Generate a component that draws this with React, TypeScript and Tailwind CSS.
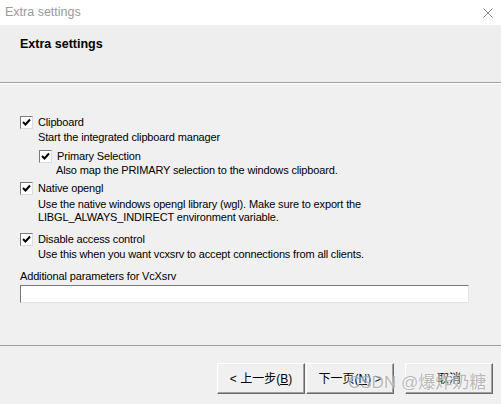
import React from "react";

const sans = "font-['Liberation_Sans','Noto_Sans_CJK_SC',sans-serif]";

function Check({ checked = true }: { checked?: boolean }) {
  return (
    <div className="w-[13px] h-[13px] shrink-0 bg-white border border-t-[#7a7a7a] border-l-[#7a7a7a] border-r-[#dcdcdc] border-b-[#dcdcdc] flex items-center justify-center">
      {checked && (
        <svg width="9" height="9" viewBox="0 0 9 9">
          <path d="M1 4 L3.5 6.5 L8 1.5" stroke="#000" strokeWidth="2" fill="none" />
        </svg>
      )}
    </div>
  );
}

function CheckRow({ label, className = "" }: { label: string; className?: string }) {
  return (
    <div className={`flex items-center h-[13px] gap-[5px] ${className}`}>
      <Check />
      <span className="leading-[13px]">{label}</span>
    </div>
  );
}

function WinButton({ children }: { children: React.ReactNode }) {
  return (
    <button className="w-[88px] h-[31px] bg-[#f0f0f0] border border-t-white border-l-white border-r-[#696969] border-b-[#696969] shadow-[inset_-1px_-1px_0_#a0a0a0] text-[12px] text-black flex items-center justify-center">
      {children}
    </button>
  );
}

export default function App() {
  return (
    <div className={`relative w-[501px] h-[404px] bg-[#f0f0f0] flex flex-col text-[11px] text-black ${sans}`}>
      {/* Title bar */}
      <div className="h-[25px] bg-white flex items-center justify-between pl-[5px] pr-[8px]">
        <span className="text-[12.5px] text-[#9a9a9a]">Extra settings</span>
        <svg width="10" height="10" viewBox="0 0 10 10">
          <path d="M0.5 0.5 L9.5 9.5 M9.5 0.5 L0.5 9.5" stroke="#8a8a8a" strokeWidth="1" />
        </svg>
      </div>

      {/* Header */}
      <div className="h-[57px] bg-[#eeeeee] pl-[20px] pt-[12px]">
        <div className="font-bold text-[12.5px] leading-[15px]">Extra settings</div>
      </div>
      <div className="h-px bg-[#a0a0a0]" />
      <div className="h-px bg-white" />

      {/* Body */}
      <div className="h-[261px] pl-[20px] pr-[32px] pt-[32px] tracking-[-0.15px]">
        <CheckRow label="Clipboard" />
        <div className="mt-px ml-[18px] leading-[14px]">Start the integrated clipboard manager</div>
        <CheckRow label="Primary Selection" className="mt-[6px] ml-[19px]" />
        <div className="ml-[36px] leading-[14px]">Also map the PRIMARY selection to the windows clipboard.</div>
        <CheckRow label="Native opengl" className="mt-[5px]" />
        <div className="mt-[3px] ml-[18px] leading-[13px]">
          Use the native windows opengl library (wgl). Make sure to export the
          <br />
          LIBGL_ALWAYS_INDIRECT environment variable.
        </div>
        <CheckRow label="Disable access control" className="mt-[9px]" />
        <div className="mt-px ml-[18px] leading-[14px]">Use this when you want vcxsrv to accept connections from all clients.</div>
        <div className="mt-[8px] leading-[14px]">Additional parameters for VcXsrv</div>
        <div className="mt-[2px] h-[18px] bg-white border border-t-[#7a7a7a] border-l-[#7a7a7a] border-r-[#e3e3e3] border-b-[#e3e3e3]" />
      </div>

      <div className="h-px bg-[#a0a0a0]" />

      {/* Footer */}
      <div className="flex-1 flex items-start pt-[17px] pl-[217px]">
        <div className="flex gap-px">
          <WinButton>
            &lt; 上一步(<span className="underline">B</span>)
          </WinButton>
          <WinButton>
            下一页(<span className="underline">N</span>) &gt;
          </WinButton>
        </div>
        <div className="ml-[11px]">
          <WinButton>取消</WinButton>
        </div>
      </div>

      <div className="absolute left-[348px] top-[373px] text-[17px] leading-[20px] text-[#8c8c8c]/60 [text-shadow:0_0_2px_white]">
        CSDN @爆炸奶糖
      </div>
    </div>
  );
}
